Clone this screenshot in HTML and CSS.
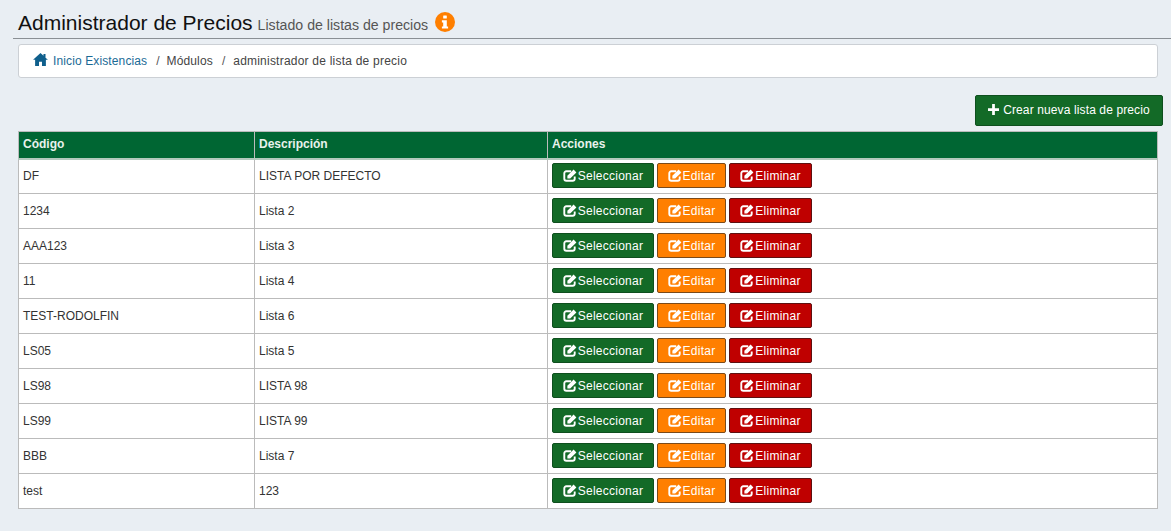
FILE: index.html
```html
<!DOCTYPE html>
<html lang="es">
<head>
<meta charset="utf-8">
<title>Administrador de Precios</title>
<link rel="stylesheet" href="styles.css">
</head>
<body>
<svg class="defs" width="0" height="0" aria-hidden="true">
  <symbol id="i-edit" viewBox="0 0 14 13"><path class="box" d="M8.200 2.300H3.300a2 2 0 0 0-2 2v5.400a2 2 0 0 0 2 2h6.400a2 2 0 0 0 2-2V7.400"/><path d="M4.400 6.800 10.600.6l2.800 2.800L7.200 9.600H4.400z"/></symbol>
</svg>
<header class="page-head">
  <h1 class="title">Administrador de Precios <small class="subtitle">Listado de listas de precios</small><svg class="info" viewBox="0 0 20 20"><circle cx="10" cy="10" r="10" fill="#ff7f00"/><rect x="8.2" y="3.6" width="3.6" height="3" rx=".5" fill="#fff"/><path d="M6.900 8.200h4.900v6.200h1.300v2.200H6.900v-2.200h1.300v-4H6.900z" fill="#fff"/></svg></h1>
</header>
<nav class="crumbs">
  <svg class="home" viewBox="0 0 16 14"><path d="M8 0 0 7.400h2.200V14h4.200V9.300h3.200V14h4.200V7.400H16l-2.600-2.400V1h-2.200v2z" fill="#0f5f8c"/></svg>
  <a class="crumb-link" href="#">Inicio Existencias</a>
  <span class="sep">/</span><span class="crumb-mid">Módulos</span>
  <span class="sep">/</span><span class="crumb-last">administrador de lista de precio</span>
</nav>
<div class="toolbar">
  <button class="btn btn-green btn-create"><svg class="plus" viewBox="0 0 12 12"><path d="M4.500 0h3v4.500H12v3H7.500V12h-3V7.500H0v-3h4.500z" fill="#fff"/></svg>Crear nueva lista de precio</button>
</div>
<table class="grid">
  <colgroup><col class="c1"><col class="c2"><col></colgroup>
  <thead><tr><th>Código</th><th>Descripción</th><th>Acciones</th></tr></thead>
  <tbody id="rows">
    <tr><td>DF</td><td>LISTA POR DEFECTO</td><td class="acts"><button class="btn btn-green"><svg class="ic"><use href="#i-edit"/></svg>Seleccionar</button><button class="btn btn-orange"><svg class="ic"><use href="#i-edit"/></svg>Editar</button><button class="btn btn-red"><svg class="ic"><use href="#i-edit"/></svg>Eliminar</button></td></tr>
    <tr><td>1234</td><td>Lista 2</td><td class="acts"><button class="btn btn-green"><svg class="ic"><use href="#i-edit"/></svg>Seleccionar</button><button class="btn btn-orange"><svg class="ic"><use href="#i-edit"/></svg>Editar</button><button class="btn btn-red"><svg class="ic"><use href="#i-edit"/></svg>Eliminar</button></td></tr>
    <tr><td>AAA123</td><td>Lista 3</td><td class="acts"><button class="btn btn-green"><svg class="ic"><use href="#i-edit"/></svg>Seleccionar</button><button class="btn btn-orange"><svg class="ic"><use href="#i-edit"/></svg>Editar</button><button class="btn btn-red"><svg class="ic"><use href="#i-edit"/></svg>Eliminar</button></td></tr>
    <tr><td>11</td><td>Lista 4</td><td class="acts"><button class="btn btn-green"><svg class="ic"><use href="#i-edit"/></svg>Seleccionar</button><button class="btn btn-orange"><svg class="ic"><use href="#i-edit"/></svg>Editar</button><button class="btn btn-red"><svg class="ic"><use href="#i-edit"/></svg>Eliminar</button></td></tr>
    <tr><td>TEST-RODOLFIN</td><td>Lista 6</td><td class="acts"><button class="btn btn-green"><svg class="ic"><use href="#i-edit"/></svg>Seleccionar</button><button class="btn btn-orange"><svg class="ic"><use href="#i-edit"/></svg>Editar</button><button class="btn btn-red"><svg class="ic"><use href="#i-edit"/></svg>Eliminar</button></td></tr>
    <tr><td>LS05</td><td>Lista 5</td><td class="acts"><button class="btn btn-green"><svg class="ic"><use href="#i-edit"/></svg>Seleccionar</button><button class="btn btn-orange"><svg class="ic"><use href="#i-edit"/></svg>Editar</button><button class="btn btn-red"><svg class="ic"><use href="#i-edit"/></svg>Eliminar</button></td></tr>
    <tr><td>LS98</td><td>LISTA 98</td><td class="acts"><button class="btn btn-green"><svg class="ic"><use href="#i-edit"/></svg>Seleccionar</button><button class="btn btn-orange"><svg class="ic"><use href="#i-edit"/></svg>Editar</button><button class="btn btn-red"><svg class="ic"><use href="#i-edit"/></svg>Eliminar</button></td></tr>
    <tr><td>LS99</td><td>LISTA 99</td><td class="acts"><button class="btn btn-green"><svg class="ic"><use href="#i-edit"/></svg>Seleccionar</button><button class="btn btn-orange"><svg class="ic"><use href="#i-edit"/></svg>Editar</button><button class="btn btn-red"><svg class="ic"><use href="#i-edit"/></svg>Eliminar</button></td></tr>
    <tr><td>BBB</td><td>Lista 7</td><td class="acts"><button class="btn btn-green"><svg class="ic"><use href="#i-edit"/></svg>Seleccionar</button><button class="btn btn-orange"><svg class="ic"><use href="#i-edit"/></svg>Editar</button><button class="btn btn-red"><svg class="ic"><use href="#i-edit"/></svg>Eliminar</button></td></tr>
    <tr><td>test</td><td>123</td><td class="acts"><button class="btn btn-green"><svg class="ic"><use href="#i-edit"/></svg>Seleccionar</button><button class="btn btn-orange"><svg class="ic"><use href="#i-edit"/></svg>Editar</button><button class="btn btn-red"><svg class="ic"><use href="#i-edit"/></svg>Eliminar</button></td></tr>
  </tbody>
</table>
</body>
</html>
```
FILE: styles.css
```css
* { box-sizing: border-box; }
html, body { height: 100%; }
body {
  margin: 0;
  padding: 0 8px 0 13px;
  background: #e9eef3;
  font-family: "Liberation Sans", Arial, sans-serif;
  font-size: 12px;
  color: #333;
  overflow: hidden;
}
.defs { position: absolute; }
.page-head { margin-right: -8px; border-bottom: 1px solid #8a8f94; height: 39px; padding: 10px 0 0 5px; }
.title { margin: 0; font-size: 21px; line-height: 26px; font-weight: 400; color: #111; white-space: nowrap; display: flex; align-items: baseline; }
.subtitle { font-size: 14.150px; color: #555; margin-left: 5px; }
.info { width: 20px; height: 20px; align-self: flex-start; margin: 2px 0 0 7px; }
.crumbs {
  margin: 5px 5px 0 5px;
  height: 34px;
  background: #fff;
  border: 1px solid #ccd0d5;
  border-radius: 3px;
  padding: 0 0 2px 14px;
  display: flex;
  align-items: center;
  color: #444;
}
.crumbs > * { position: relative; top: 1px; }
.crumbs .home { top: -1px; }
.home { width: 15px; height: 13px; margin-right: 5px; }
.crumb-link { color: #1a6a96; text-decoration: none; letter-spacing: .12px; }
.crumb-mid { margin-left: -1px; letter-spacing: .14px; }
.crumb-last { letter-spacing: .22px; }
.sep { margin: 0 8px 0 9px; color: #555; }
.toolbar { display: flex; justify-content: flex-end; margin: 17px 0 5px 0; }
.btn {
  display: inline-flex;
  align-items: center;
  justify-content: center;
  height: 25px;
  padding: 1px 0 0;
  border: 1px solid #333;
  border-radius: 2px;
  color: #fff;
  font: 12px "Liberation Sans", Arial, sans-serif;
  letter-spacing: .25px;
}
.btn-green { width: 102px; background: #136a27; border-color: #0e4f1e; }
.btn-orange { width: 69px; margin: 0 3px; background: #ff7f00; border-color: #7a4a1a; }
.btn-red { width: 83px; background: #bf0000; border-color: #5e1010; }
.btn-create { width: 188px; height: 31px; padding: 0 0 2px; letter-spacing: .12px; }
.plus { width: 11px; height: 11px; margin-right: 4px; }
.ic { width: 14px; height: 13px; margin-right: 1px; fill: #fff; }
.box { fill: none; stroke: #fff; stroke-width: 1.900; }
.grid {
  margin-left: 5px;
  width: 1140px;
  border-collapse: collapse;
  table-layout: fixed;
  background: #fff;
  border: 1px solid #bbb;
}
.c1 { width: 236px; }
.c2 { width: 293px; }
.grid th {
  height: 27px;
  padding: 0 4px 2px;
  background: #006633;
  color: #e8f2ec;
  text-align: left;
  font-size: 12px;
  font-weight: 700;
  border: 1px solid #bbb;
  border-bottom: 2px solid #b3c9bd;
}
.grid td {
  height: 35px;
  padding: 0 4px;
  border: 1px solid #bbb;
  color: #333;
}
.grid td.acts { padding-bottom: 2px; }
.acts .btn { vertical-align: middle; }
```
